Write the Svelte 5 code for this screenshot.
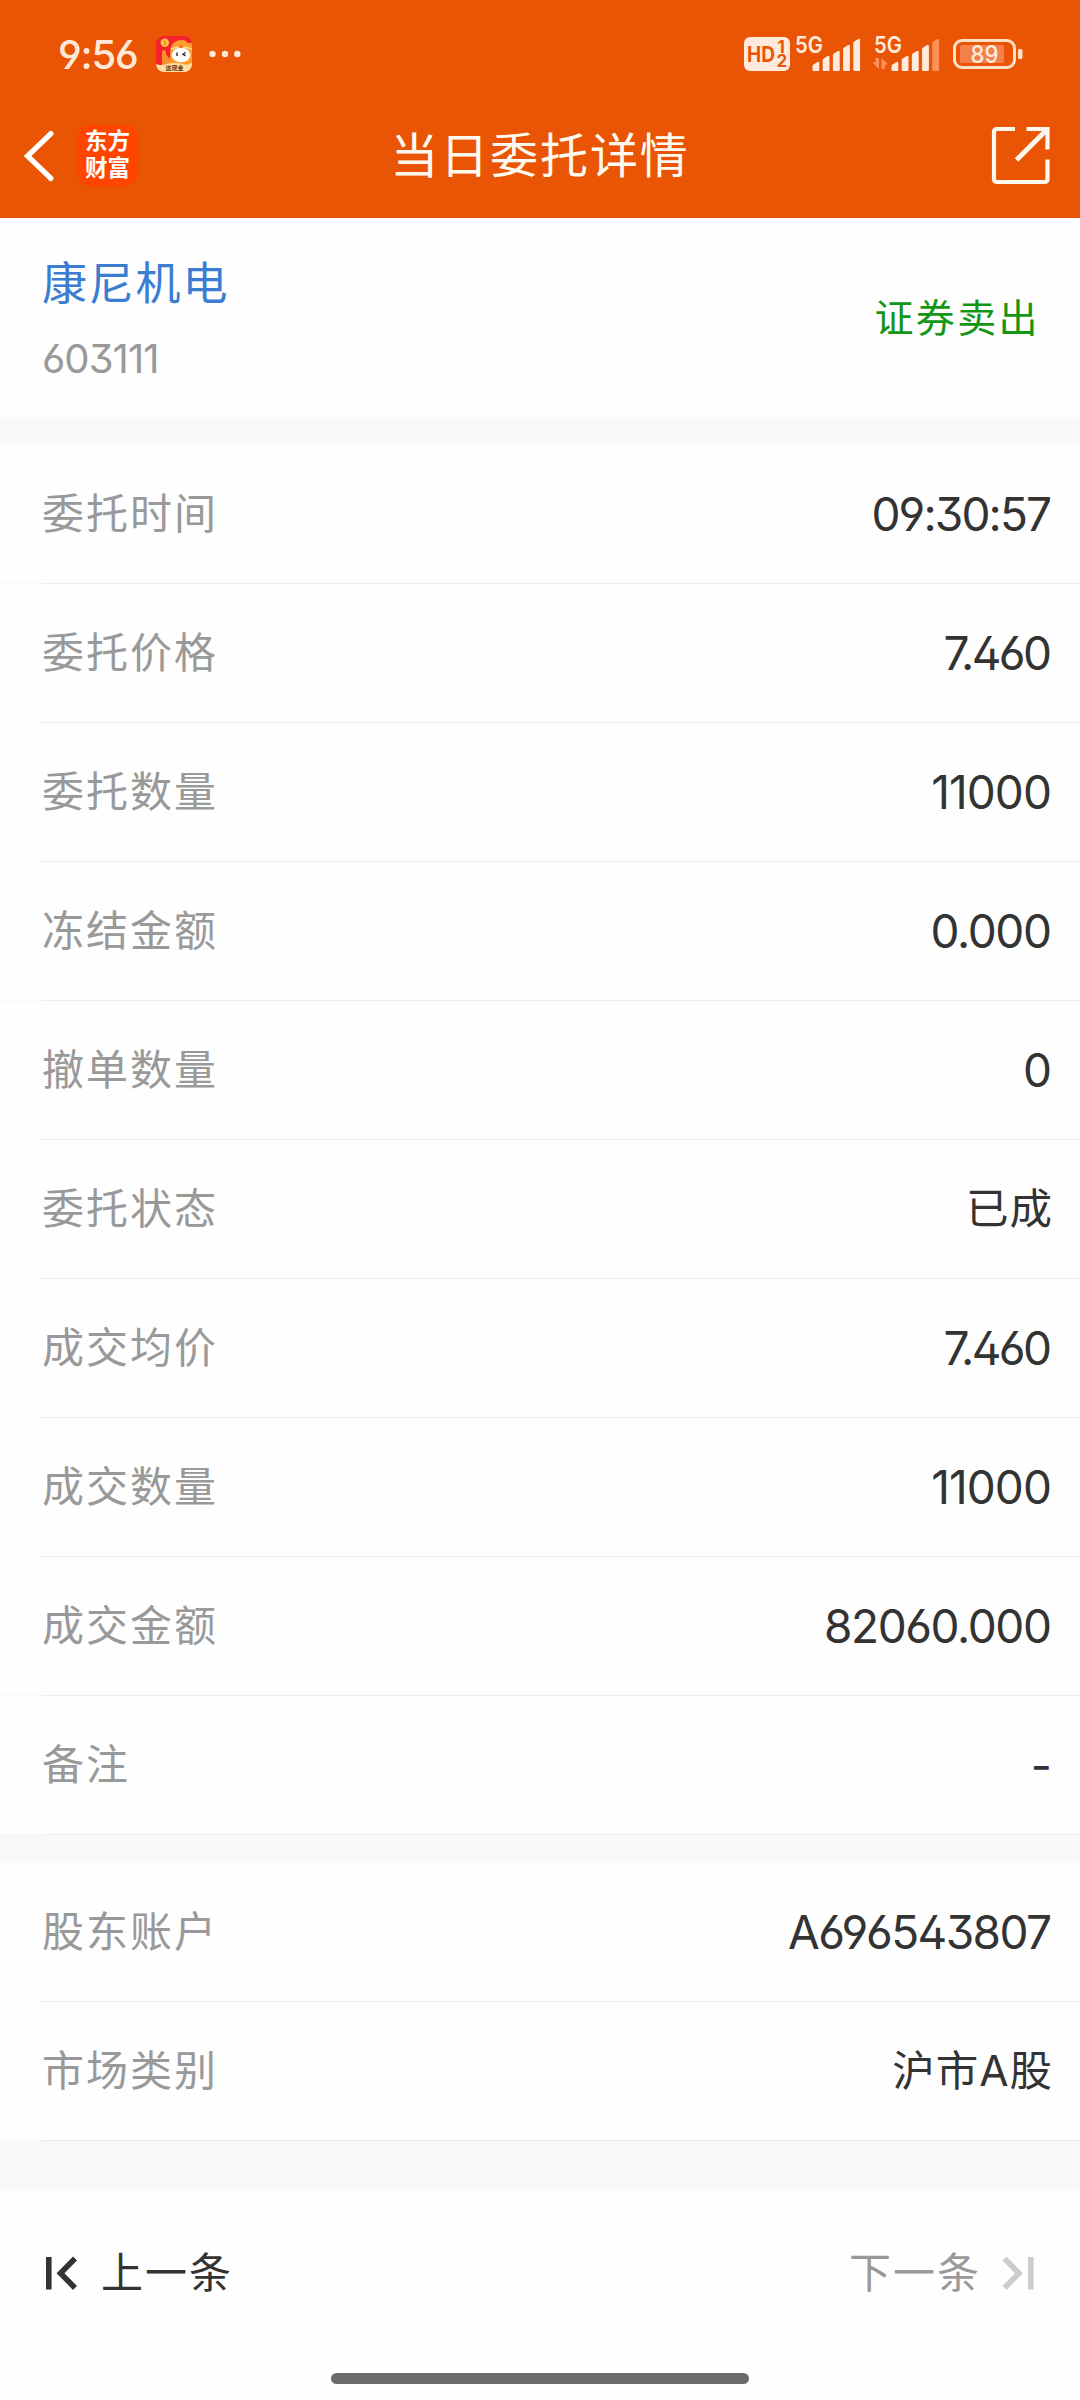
<script lang="ts">
	type Row = { label: string; value: string; tracking?: number; cjk?: boolean };

	const orderRows: Row[] = [
		{ label: '委托时间', value: '09:30:57', tracking: -1.9 },
		{ label: '委托价格', value: '7.460', tracking: -2.6 },
		{ label: '委托数量', value: '11000', tracking: -0.9 },
		{ label: '冻结金额', value: '0.000', tracking: -1.4 },
		{ label: '撤单数量', value: '0', tracking: -1 },
		{ label: '委托状态', value: '已成', tracking: 1, cjk: true },
		{ label: '成交均价', value: '7.460', tracking: -2.6 },
		{ label: '成交数量', value: '11000', tracking: -0.9 },
		{ label: '成交金额', value: '82060.000', tracking: -1.4 },
		{ label: '备注', value: '-' }
	];

	const accountRows: Row[] = [
		{ label: '股东账户', value: 'A696543807', tracking: -1.6 },
		{ label: '市场类别', value: '沪市A股', tracking: 1, cjk: true }
	];

	const groups = [orderRows, accountRows];
	const bars = [8, 14, 19, 25, 31];
</script>

{#snippet signal(dimmed: number)}
	{#each bars as h, i}
		<path
			d="M{i * 10.2} 34v{-(h - 4)}q0 -1 1 -1.6l3.6 -2.2q2.2 -1 2.2 1v{h - 1.2}q0 1 -1 1h-4.8q-1 0 -1 -1z"
			fill={i >= 5 - dimmed ? '#ff905c' : '#ffeadd'}
		/>
	{/each}
{/snippet}

<div class="page">
	<header>
		<div class="status">
			<span class="clock">9:56</span>
			<svg class="notice" width="36" height="36" viewBox="0 0 36 36">
				<defs>
					<clipPath id="tile"><rect width="36" height="36" rx="8" /></clipPath>
				</defs>
				<g clip-path="url(#tile)">
					<rect width="36" height="36" fill="#f5222c" />
					<path d="M14 36V18C14 8 19 4 26 4q4 0 6 3h4v29z" fill="#ff9d2e" />
					<path d="M6 30V17q0-3 2-3t2 4l2 3 3 3v8z" fill="#fb8f2b" />
					<circle cx="8.8" cy="6.8" r="4.2" fill="#ffc348" />
					<path d="M8.8 4.5v4.6" stroke="#f08a1c" stroke-width="1.6" />
					<path d="M15 13q10-4 21 0" stroke="#ffdf94" stroke-width="1.4" fill="none" />
					<path d="M25 8.5l2.5 2.5-2.5 2.5-2.5-2.5z" fill="#f26b1b" />
					<ellipse cx="25" cy="19" rx="9.3" ry="7.3" fill="#fff" />
					<path d="M21 16.5v3.5M29.5 16.5l-2.5 1.7 2.5 1.7" stroke="#3b2622" stroke-width="1.4" fill="none" />
					<path d="M0 28q5 2 10 0 9-2 17 0 4 2 9-1v9H0z" fill="#ffdfa0" />
					<text x="18.5" y="34.3" font-size="6" font-weight="700" text-anchor="middle" fill="#6b3311">这现金</text>
				</g>
			</svg>
			<svg width="32" height="8" viewBox="0 0 32 8">
				<circle cx="3.5" cy="4" r="3.2" fill="#ffe6d6" />
				<circle cx="16" cy="4" r="3.2" fill="#ffe6d6" />
				<circle cx="28.3" cy="4" r="3.2" fill="#ffe6d6" />
			</svg>

			<svg class="system" width="280" height="36" viewBox="0 0 280 36">
				<rect x="0" y="1" width="46" height="34" rx="6" fill="#ffeadd" />
				<g fill="#e95504" font-weight="700">
					<text x="3" y="25.5" font-size="21" textLength="28" lengthAdjust="spacingAndGlyphs">HD</text>
					<text x="33.5" y="17" font-size="17">1</text>
					<text x="32.5" y="31.3" font-size="17">2</text>
				</g>
				<g fill="#ffeadd" font-size="23" font-weight="600">
					<text x="51" y="16.8" textLength="28" lengthAdjust="spacingAndGlyphs">5G</text>
					<text x="130" y="16.8" textLength="28" lengthAdjust="spacingAndGlyphs">5G</text>
				</g>
				<g transform="translate(68.5 0)">{@render signal(0)}</g>
				<g transform="translate(147.5 0)">{@render signal(1)}</g>
				<path d="M131.5 22h3.5v11l-6.5-6.5h3zM137.5 33V22l6.5 6.5h-3V33z" fill="#ff905c" />
				<rect x="210.5" y="4.5" width="60" height="27" rx="7.5" fill="none" stroke="#ffe1c8" stroke-width="3" />
				<rect x="216" y="9" width="44" height="18" rx="2" fill="#f3804a" />
				<rect x="274" y="13" width="4.5" height="10" rx="1.5" fill="#ffe1c8" />
				<text x="226.5" y="27" font-size="24" font-weight="500" textLength="28" lengthAdjust="spacingAndGlyphs" fill="#ffeadd">89</text>
			</svg>
		</div>

		<div class="nav">
			<div class="nav-left">
				<svg width="30" height="50" viewBox="0 0 30 50">
					<path d="M27 2.5L3.5 25L27 47.5" fill="none" stroke="#fff" stroke-width="5.2" stroke-linecap="round" />
				</svg>
				<div class="logo"><span>东方</span><span>财富</span></div>
			</div>
			<h1>当日委托详情</h1>
			<svg width="60" height="60" viewBox="0 0 60 60">
				<g fill="none" stroke="#fff8ee" stroke-width="4.2">
					<path d="M25 4H7Q4 4 4 7V54Q4 57 7 57H54.5Q57.5 57 57.5 54V34.5" />
					<path d="M36.5 4H57.5V24.5" />
					<path d="M57 4.5L26.5 35" stroke-width="4.8" />
				</g>
			</svg>
		</div>
	</header>

	<section class="stock">
		<div>
			<div class="name">康尼机电</div>
			<div class="code">603111</div>
		</div>
		<div class="side">证券卖出</div>
	</section>

	{#each groups as rows}
		<section class="group">
			{#each rows as row}
				<div class="row">
					<span class="label">{row.label}</span>
					<!-- the margin takes back the tracking after the last glyph -->
					<span
						class="value"
						class:cjk={row.cjk}
						style:letter-spacing="{row.tracking ?? 0}px"
						style:margin-right="{-(row.tracking ?? 0)}px">{row.value}</span
					>
				</div>
			{/each}
		</section>
	{/each}

	<footer>
		<div class="pager">
			<button>
				<svg width="32" height="34" viewBox="0 0 32 34">
					<path d="M3.8 1V33.5M30 2.5L15.5 17.2L30 32" fill="none" stroke="#333" stroke-width="5.6" />
				</svg>
				<span>上一条</span>
			</button>
			<button class="disabled">
				<span>下一条</span>
				<svg width="32" height="34" viewBox="0 0 32 34">
					<path d="M28.8 1V33.5M2.5 2.5L17 17.2L2.5 32" fill="none" stroke="#ccc" stroke-width="5.6" />
				</svg>
			</button>
		</div>
		<div class="home"></div>
	</footer>
</div>

<style>
	:global(body) {
		background: #fefefe;
	}

	.page {
		display: flex;
		flex-direction: column;
		width: 1080px;
		height: 2400px;
		background: #f6f8fa;
		font-family: Inter, 'Noto Sans CJK SC', sans-serif;
		color: #333;
		overflow: hidden;
	}

	svg {
		display: block;
		flex: none;
		overflow: visible;
	}

	header {
		box-sizing: border-box;
		height: 218px;
		padding-top: 36px;
		background: #e95504;
	}

	.status {
		display: flex;
		align-items: center;
		height: 36px;
		padding: 0 56px 0 58px;
	}

	.clock {
		width: 98px;
		font-size: 40px;
		font-weight: 500;
		letter-spacing: -1.2px;
		color: #ffe8d8;
		font-feature-settings: 'ss01';
	}

	.notice {
		margin-right: 17px;
	}

	.system {
		margin-left: auto;
	}

	.nav {
		display: grid;
		grid-template-columns: 1fr auto 1fr;
		align-items: center;
		height: 64px;
		margin-top: 53px;
		padding: 0 30px 0 24px;
	}

	.nav > svg {
		justify-self: end;
		margin-bottom: 4px;
	}

	.nav-left {
		display: flex;
		align-items: center;
		gap: 23px;
		padding-bottom: 3px;
	}

	.logo {
		display: flex;
		flex-direction: column;
		align-items: center;
		justify-content: center;
		box-sizing: border-box;
		width: 61px;
		height: 61px;
		padding-bottom: 3px;
		border-radius: 13px;
		background: #ff4500;
		color: #fff;
		font-size: 22.5px;
		font-weight: 700;
		line-height: 27px;
	}

	h1 {
		margin: 0 -6px 0 0;
		padding-bottom: 2px;
		font-size: 48px;
		line-height: 60px;
		font-weight: 400;
		letter-spacing: 1.9px;
		color: #fffaf0;
	}

	.stock {
		display: flex;
		align-items: center;
		justify-content: space-between;
		box-sizing: border-box;
		height: 199px;
		margin-bottom: 28px;
		padding: 0 40px 0 42px;
		background: #fefefe;
	}

	.name {
		padding-top: 14px;
		font-size: 45px;
		line-height: 68px;
		letter-spacing: 1.8px;
		color: #3b7dd0;
	}

	.code {
		font-size: 40px;
		line-height: 82px;
		letter-spacing: -0.9px;
		color: #999;
		font-feature-settings: 'ss01';
	}

	.side {
		padding-bottom: 6px;
		font-size: 39px;
		letter-spacing: 2.4px;
		color: #149614;
	}

	.group {
		margin-bottom: 28px;
	}

	.row {
		display: flex;
		align-items: center;
		justify-content: space-between;
		height: 138px;
		padding: 0 28px 0 42px;
		margin-bottom: 1px;
		background: #fefefe;
		box-shadow: 41px 1px 0 #ebedee;
	}

	.label {
		padding-bottom: 8px;
		font-size: 42px;
		letter-spacing: 2px;
		color: #999;
	}

	.value {
		font-size: 46px;
		font-feature-settings: 'ss01';
	}

	.value.cjk {
		padding-bottom: 8px;
		font-size: 42.5px;
	}

	footer {
		display: flex;
		flex-direction: column;
		align-items: center;
		height: 209px;
		margin-top: 22px;
		background: #fefefe;
	}

	.pager {
		display: flex;
		align-items: center;
		justify-content: space-between;
		box-sizing: border-box;
		width: 100%;
		height: 164px;
		padding: 0 46px 0 45px;
	}

	button {
		display: flex;
		align-items: center;
		gap: 24px;
		padding: 0;
		border: 0;
		background: none;
		font: inherit;
		font-size: 42px;
		letter-spacing: 2px;
		color: #333;
	}

	button span {
		padding-bottom: 7px;
	}

	.disabled {
		gap: 21px;
		color: #999;
	}

	.home {
		width: 418px;
		height: 11px;
		margin-top: 18px;
		border-radius: 6px;
		background: #6b6b6b;
	}
</style>
